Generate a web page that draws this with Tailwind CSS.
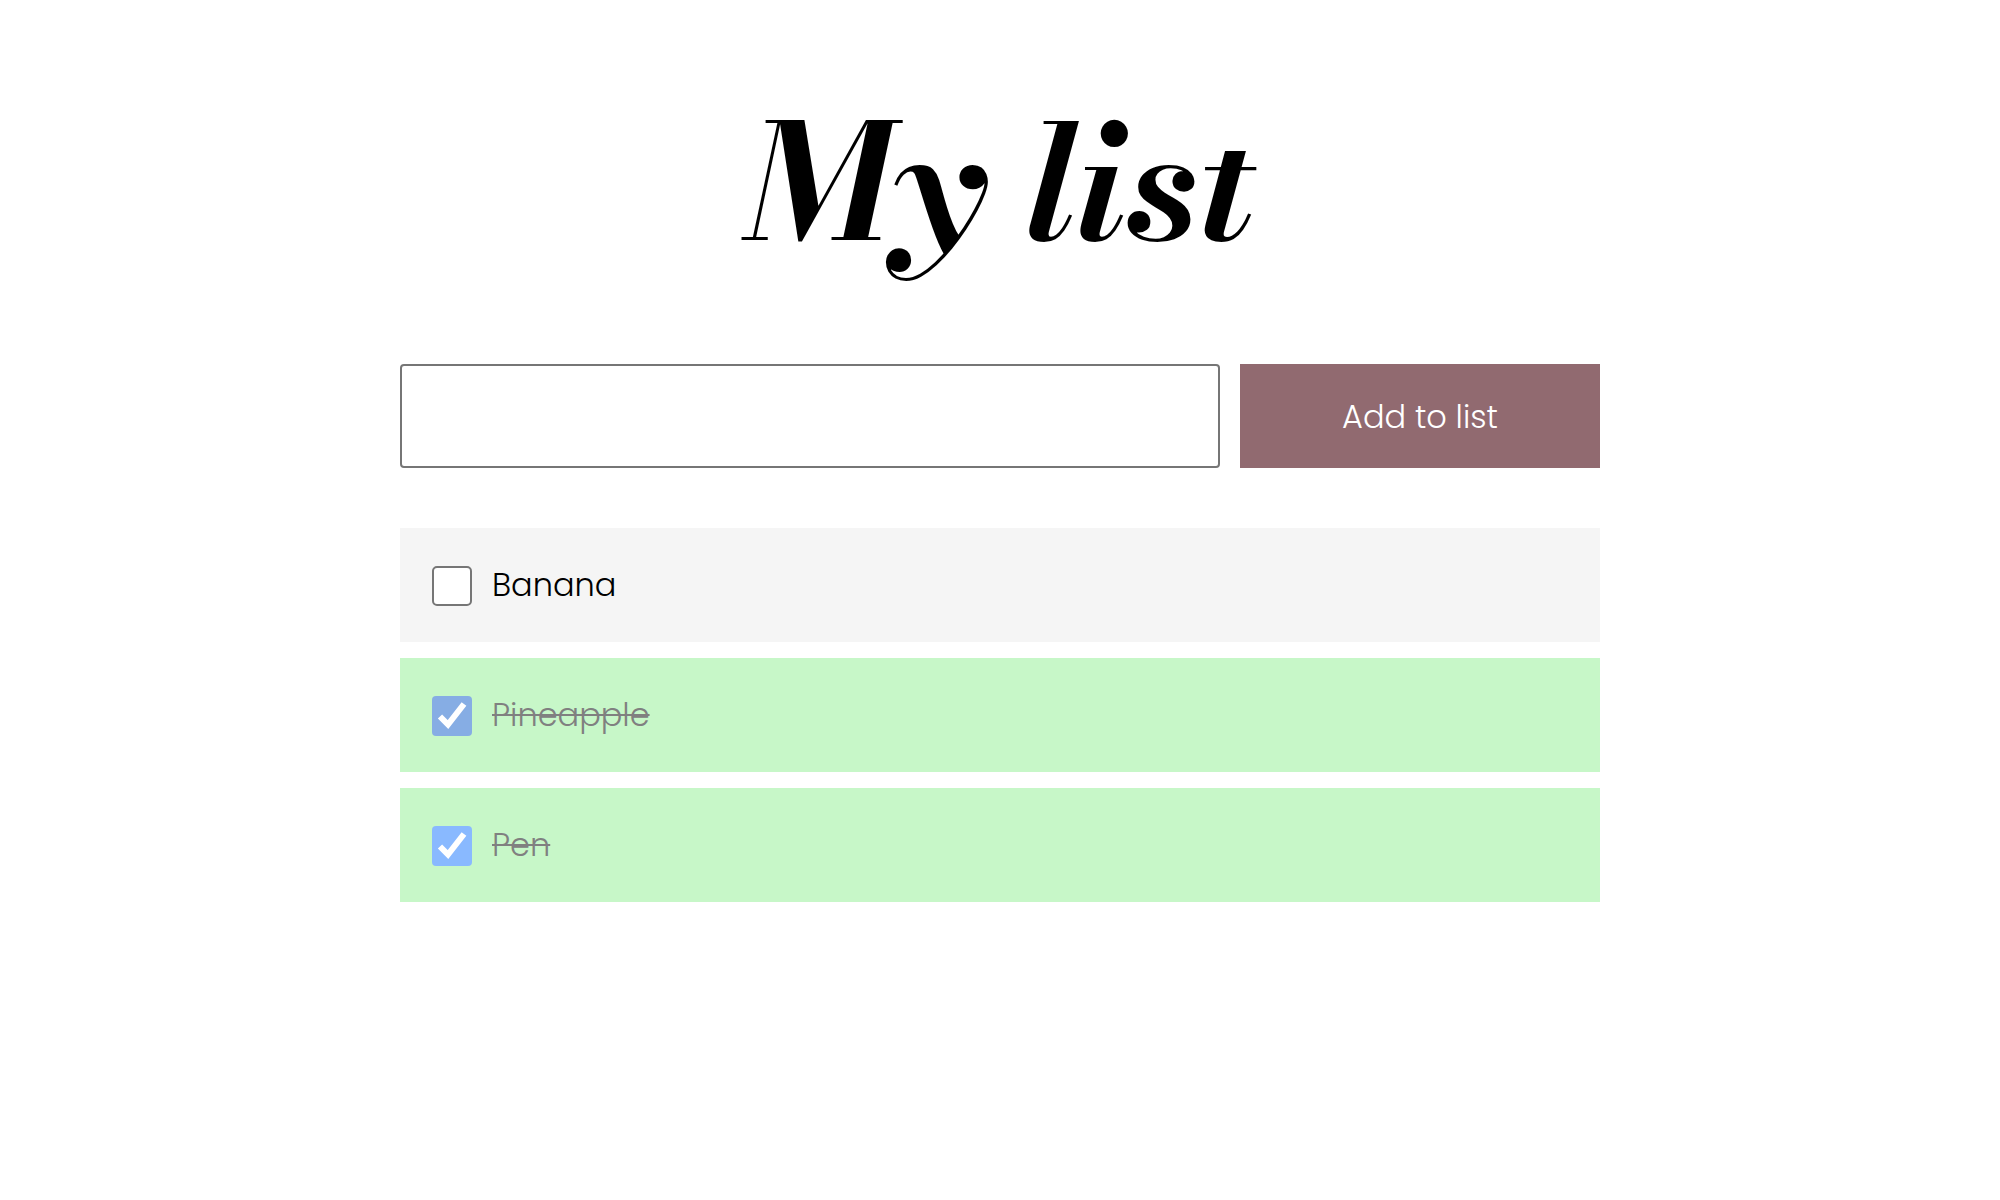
<!DOCTYPE html>
<html lang="en">
<head>
<meta charset="utf-8">
<meta name="viewport" content="width=device-width, initial-scale=1">
<title>My list</title>
<script src="https://cdn.jsdelivr.net/npm/@tailwindcss/browser@4"></script>
</head>
<body class="bg-white text-black font-['Poppins','Inter',sans-serif] text-[32px] font-light leading-[50px]">
<main class="mx-auto w-full max-w-[1200px] pt-18">
  <h1 class="mb-18 text-center font-['Bodoni_Moda','Libre_Bodoni','Bodoni_MT','Liberation_Serif',serif] text-[160px] font-bold italic leading-[220px]">My list</h1>
  <form class="mb-15 flex gap-5">
    <input type="text" aria-label="New item" class="h-26 min-w-0 flex-1 rounded-[4px] border-2 border-[#767676] bg-white px-6 outline-none">
    <button type="button" class="h-26 w-[30%] bg-[#916a70] pt-px text-white">Add to list</button>
  </form>
  <ul class="flex flex-col gap-4">
    <li class="bg-[#f5f5f5]">
      <label class="flex items-center gap-5 p-8">
        <span class="mt-0.5 grid size-10">
          <input type="checkbox" class="col-start-1 row-start-1 size-10 appearance-none rounded-[5px] border-2 border-[#767676] bg-white">
        </span>
        <span>Banana</span>
      </label>
    </li>
    <li class="bg-[#c7f7c8]">
      <label class="flex items-center gap-5 p-8 text-[#808080]">
        <span class="mt-0.5 grid size-10">
          <input type="checkbox" checked class="col-start-1 row-start-1 size-10 appearance-none rounded-[4px] bg-[#86ade4]">
          <svg viewBox="0 0 40 40" class="pointer-events-none col-start-1 row-start-1 size-10" fill="none" stroke="#fff" stroke-width="6" aria-hidden="true"><path d="M8 20.5 16 28.5 32 8"/></svg>
        </span>
        <span class="line-through decoration-2">Pineapple</span>
      </label>
    </li>
    <li class="bg-[#c7f7c8]">
      <label class="flex items-center gap-5 p-8 text-[#808080]">
        <span class="mt-0.5 grid size-10">
          <input type="checkbox" checked class="col-start-1 row-start-1 size-10 appearance-none rounded-[4px] bg-[#89b9ff]">
          <svg viewBox="0 0 40 40" class="pointer-events-none col-start-1 row-start-1 size-10" fill="none" stroke="#fff" stroke-width="6" aria-hidden="true"><path d="M8 20.5 16 28.5 32 8"/></svg>
        </span>
        <span class="line-through decoration-2">Pen</span>
      </label>
    </li>
  </ul>
</main>
</body>
</html>
